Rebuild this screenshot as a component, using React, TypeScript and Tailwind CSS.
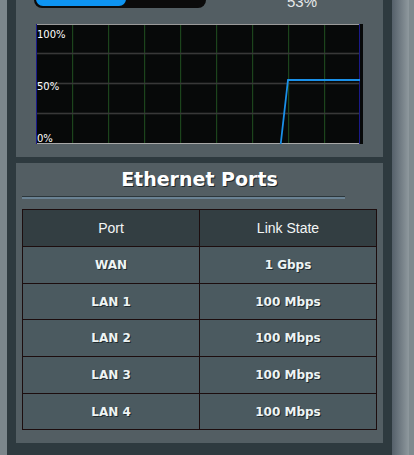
import React from "react";

const ports = [
  { port: "WAN", state: "1 Gbps", h: "h-[37px]" },
  { port: "LAN 1", state: "100 Mbps", h: "h-[36px]" },
  { port: "LAN 2", state: "100 Mbps", h: "h-[37px]" },
  { port: "LAN 3", state: "100 Mbps", h: "h-[37px]" },
  { port: "LAN 4", state: "100 Mbps", h: "h-[36px]" },
];

function UsageChart() {
  const greens = [36, 72, 108, 144, 180, 216, 252, 288];
  const grays = [29.5, 59.5, 89.5];
  return (
    <svg width="327" height="120" viewBox="0 0 327 120" className="block">
      <rect x="0" y="0" width="327" height="120" fill="#070909" />
      {greens.map((x) => (
        <rect key={x} x={x} y="0" width="1.2" height="120" fill="#1c441c" />
      ))}
      {grays.map((y) => (
        <rect key={y} x="0" y={y - 0.8} width="323" height="1.6" fill="#383838" />
      ))}
      <rect x="0" y="0" width="323" height="1" fill="#9a9a9a" />
      <rect x="0" y="119" width="323" height="1" fill="#a8a8a8" />
      <rect x="0" y="0" width="1" height="120" fill="#1a1a8a" />
      <rect x="323" y="0" width="1" height="120" fill="#1a1a8a" />
      <polyline
        points="244.7,120 252,56 324,56"
        fill="none"
        stroke="#1a90e8"
        strokeWidth="1.8"
      />
      <g fill="#ffffff" fontFamily="'DejaVu Sans', sans-serif" fontSize="10">
        <text x="1" y="13.5">100%</text>
        <text x="1" y="66">50%</text>
        <text x="1" y="118">0%</text>
      </g>
    </svg>
  );
}

export default function App() {
  return (
    <div className="w-[414px] h-[455px] overflow-hidden flex bg-[#7a858a]">
      <div className="w-[7px] shrink-0 bg-[#7b868b]" />
      <div className="w-[385px] shrink-0 bg-[#2e3a3f] px-[9px] flex flex-col gap-[6px]">
        {/* CPU usage panel */}
        <div className="-mt-[12px] bg-[#535e63] pb-[13px]">
          <div className="flex items-start h-[20px]">
            <div className="ml-[18px] w-[172px] h-[20px] rounded-[8px] bg-[#0b0b0b] p-[2px]">
              <div className="w-[90px] h-full rounded-[7px] bg-[#0d94f2]" />
            </div>
            <div className="ml-[81px] mt-[6px] text-[15px] leading-[15px] text-[#e6e9ea] font-['Liberation_Sans',sans-serif]">
              53%
            </div>
          </div>
          <div className="mt-[16px] ml-[20px]">
            <UsageChart />
          </div>
        </div>

        {/* Ethernet ports panel */}
        <div className="bg-[#535e63] px-[6px] pt-[5px] pb-[13px]">
          <div className="h-[22px] leading-[22px] text-center text-[19px] font-bold text-white font-['DejaVu_Sans',sans-serif] [text-shadow:1px_1px_0_#1e272b]">
            Ethernet Ports
          </div>
          <div className="mt-[6px] w-[323px]">
            <div className="h-[1px] bg-[#2c373c]" />
            <div className="h-[2px] bg-[#6a8293]" />
          </div>
          <div className="mt-[10px] border-l border-t border-[#1c0d0e]">
            <div className="grid grid-cols-2 h-[37px] bg-[#333e42] text-[14px] text-[#f4f6f6] font-['Liberation_Sans',sans-serif]">
              <div className="flex items-center justify-center border-r border-b border-[#1c0d0e]">Port</div>
              <div className="flex items-center justify-center border-r border-b border-[#1c0d0e]">Link State</div>
            </div>
            {ports.map((p) => (
              <div
                key={p.port}
                className={`grid grid-cols-2 ${p.h} bg-[#4b5a60] text-[12px] font-bold text-[#eef4f4] font-['DejaVu_Sans',sans-serif] [text-shadow:1px_1px_0_#1f2a2e]`}
              >
                <div className="flex items-center justify-center border-r border-b border-[#1c0d0e]">{p.port}</div>
                <div className="flex items-center justify-center border-r border-b border-[#1c0d0e]">{p.state}</div>
              </div>
            ))}
          </div>
        </div>
      </div>
      <div className="w-[17px] shrink-0 bg-gradient-to-r from-[#55606a] to-[#8f999e]" />
      <div className="w-[5px] shrink-0 bg-[#7f8a8f]" />
    </div>
  );
}
